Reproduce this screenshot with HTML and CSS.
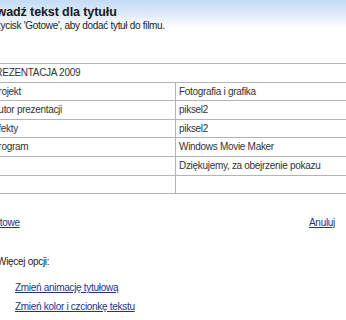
FILE: index.html
```html
<!DOCTYPE html>
<html lang="pl">
<head>
<meta charset="utf-8">
<link rel="stylesheet" href="styles.css">
</head>
<body>
<div class="page">
  <header class="head">
    <h1 class="title">Wprowadź tekst dla tytułu</h1>
    <p class="sub">Kliknij przycisk 'Gotowe', aby dodać tytuł do filmu.</p>
  </header>
  <div class="grid">
    <div class="row full"><div class="cell">PREZENTACJA 2009</div></div>
    <div class="row"><div class="cell left">Projekt</div><div class="cell right">Fotografia i grafika</div></div>
    <div class="row"><div class="cell left">Autor prezentacji</div><div class="cell right">piksel2</div></div>
    <div class="row"><div class="cell left">Efekty</div><div class="cell right">piksel2</div></div>
    <div class="row"><div class="cell left">Program</div><div class="cell right">Windows Movie Maker</div></div>
    <div class="row"><div class="cell left"></div><div class="cell right edit">Dziękujemy, za obejrzenie pokazu</div></div>
    <div class="row"><div class="cell left"></div><div class="cell right"></div></div>
  </div>
  <div class="actions">
    <a class="link done" href="#">Gotowe</a>
    <a class="link" href="#">Anuluj</a>
  </div>
  <div class="more">
    <p class="more-label">Więcej opcji:</p>
    <a class="link opt first" href="#">Zmień animację tytułową</a>
    <a class="link opt" href="#">Zmień kolor i czcionkę tekstu</a>
  </div>
</div>
</body>
</html>
```
FILE: styles.css
```css
html, body {
  margin: 0;
  padding: 0;
  background: #fff;
  overflow: hidden;
}
body {
  width: 346px;
  height: 320px;
  font-family: "Liberation Sans", Arial, sans-serif;
  font-size: 10px;
  letter-spacing: -0.3px;
  color: #333;
}
.page {
  display: flex;
  flex-direction: column;
}
.head {
  height: 56px;
  background: linear-gradient(#c4dbf6 0px, #d9e8fa 12px, #f2f7fd 22px, #fff 30px);
  padding-top: 5px;
  box-sizing: border-box;
}
.title {
  margin: 0 0 0 -35px;
  font-size: 12.5px;
  font-weight: bold;
  letter-spacing: -0.1px;
  color: #1a1a1a;
  line-height: 15px;
  white-space: nowrap;
}
.sub {
  margin: 0 0 0 -39px;
  font-size: 10px;
  line-height: 12px;
  color: #222;
  white-space: nowrap;
}
.grid {
  margin-top: 7px;
  margin-left: -60px;
  width: 420px;
  border-top: 1px solid #b4b4b4;
}
.row {
  display: flex;
  height: 17.6px;
  border-bottom: 1px solid #b4b4b4;
}
.cell {
  padding-left: 4px;
  line-height: 17.6px;
  white-space: nowrap;
  box-sizing: border-box;
}
.full .cell {
  padding-left: 49px;
}
.left {
  width: 236px;
  padding-left: 52px;
  border-right: 1px solid #b4b4b4;
}
.right {
  flex: 1;
  padding-left: 3px;
}
.actions {
  display: flex;
  justify-content: space-between;
  margin-top: 23px;
  padding-right: 11px;
}
.link {
  color: #23338a;
  text-decoration: underline;
  font-size: 10px;
  line-height: 12px;
}
.done {
  margin-left: -13px;
}
.more {
  display: flex;
  flex-direction: column;
  align-items: flex-start;
  margin-top: 27px;
}
.more-label {
  margin: 0 0 0 -3px;
  line-height: 12px;
  color: #222;
}
.opt {
  margin-left: 15px;
  margin-top: 7px;
}
.opt.first {
  margin-top: 14px;
}
```
